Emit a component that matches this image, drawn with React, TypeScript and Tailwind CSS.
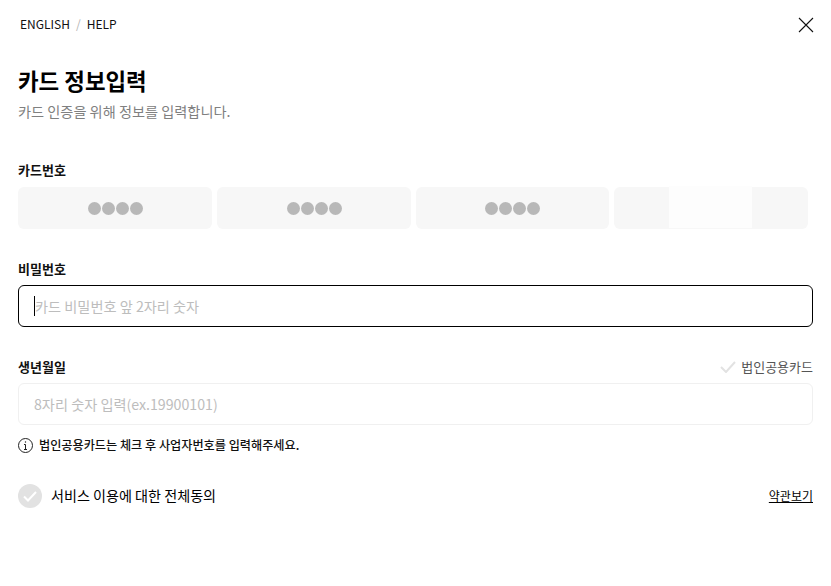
import React from "react";

const font = { fontFamily: '"Noto Sans CJK KR", "Noto Sans", sans-serif' };

function Dots() {
  return (
    <div className="flex ml-[1px]">
      {[0, 1, 2, 3].map((i) => (
        <span key={i} className="w-[14px] h-[14px] flex items-center justify-center">
          <span className="block w-[13px] h-[13px] rounded-full bg-[#b8b8b8]" />
        </span>
      ))}
    </div>
  );
}

function CardCell({ children }: { children?: React.ReactNode }) {
  return (
    <div className="flex-1 h-[42px] rounded-[6px] bg-[#f7f7f7] flex items-center justify-center">
      {children}
    </div>
  );
}

export default function App() {
  return (
    <div className="w-[831px] h-[586px] bg-white overflow-hidden px-[18px] text-black" style={font}>
      <div className="h-[49px] flex items-center justify-between pl-[2px]">
        <div className="flex items-center mb-[2px] text-[12px] leading-[18px] text-[#111]">
          <span>ENGLISH</span>
          <span className="mx-[6px] text-[#b5b5b5]">/</span>
          <span>HELP</span>
        </div>
        <svg width="16" height="16" viewBox="0 0 16 16" className="mr-[-1px]" fill="none" stroke="#111" strokeWidth="1.1">
          <path d="M1 1 L15 15 M15 1 L1 15" />
        </svg>
      </div>

      <h1 className="mt-[15px] text-[22.4px] leading-[32px] font-bold text-black">카드 정보입력</h1>
      <p className="mt-[4px] text-[14.2px] leading-[22px] text-[#808080]">카드 인증을 위해 정보를 입력합니다.</p>

      <div className="mt-[38px] text-[13px] leading-[20px] font-bold text-[#111]">카드번호</div>
      <div className="mt-[7px] w-[790px] flex gap-[5px]">
        <CardCell><Dots /></CardCell>
        <CardCell><Dots /></CardCell>
        <CardCell><Dots /></CardCell>
        <CardCell>
          <div className="w-[83px] h-[42px] mt-[-3px] mr-[2px] bg-[#fdfdfd]" />
        </CardCell>
      </div>

      <div className="mt-[30px] text-[13px] leading-[20px] font-bold text-[#111]">비밀번호</div>
      <div className="mt-[6px] h-[42px] rounded-[6px] border border-black flex items-center pl-[15px]">
        <span className="w-px h-[20px] bg-black" />
        <span className="mt-[2px] text-[14.2px] text-[#bdbdbd]">카드 비밀번호 앞 2자리 숫자</span>
      </div>

      <div className="mt-[30px] flex items-center justify-between h-[20px]">
        <span className="text-[13px] leading-[20px] font-bold text-[#111]">생년월일</span>
        <span className="flex items-center gap-[5px] text-[13px] text-[#555]">
          <svg width="16" height="12" viewBox="0 0 16 12" fill="none" stroke="#e2e2e2" strokeWidth="2">
            <path d="M1 6 L6 11 L15 1" />
          </svg>
          법인공용카드
        </span>
      </div>
      <div className="mt-[6px] h-[42px] rounded-[6px] border border-[#f0f0f0] flex items-center pl-[15px]">
        <span className="mt-[2px] text-[14.2px] text-[#bdbdbd]">8자리 숫자 입력(ex.19900101)</span>
      </div>

      <div className="mt-[11px] flex items-center gap-[6px] text-[12.15px] leading-[18px] font-medium text-[#111]">
        <svg width="15" height="15" viewBox="0 0 15 15" fill="none" stroke="#222" strokeWidth="1">
          <circle cx="7.5" cy="7.5" r="7" />
          <path d="M7.5 6.5 V11.5 M6 11.5 H9 M6 6.5 H7.5" />
          <circle cx="7.5" cy="4" r="0.7" fill="#222" stroke="none" />
        </svg>
        법인공용카드는 체크 후 사업자번호를 입력해주세요.
      </div>

      <div className="mt-[30px] flex items-center justify-between h-[24px]">
        <div className="flex items-center gap-[9px]">
          <span className="w-[24px] h-[24px] rounded-full bg-[#e2e2e2] flex items-center justify-center">
            <svg width="14" height="11" viewBox="0 0 14 11" fill="none" stroke="#fff" strokeWidth="2">
              <path d="M1 5.5 L5 9.5 L13 1" />
            </svg>
          </span>
          <span className="text-[14.1px] text-black">서비스 이용에 대한 전체동의</span>
        </div>
        <a className="text-[12px] underline text-black">약관보기</a>
      </div>
    </div>
  );
}
